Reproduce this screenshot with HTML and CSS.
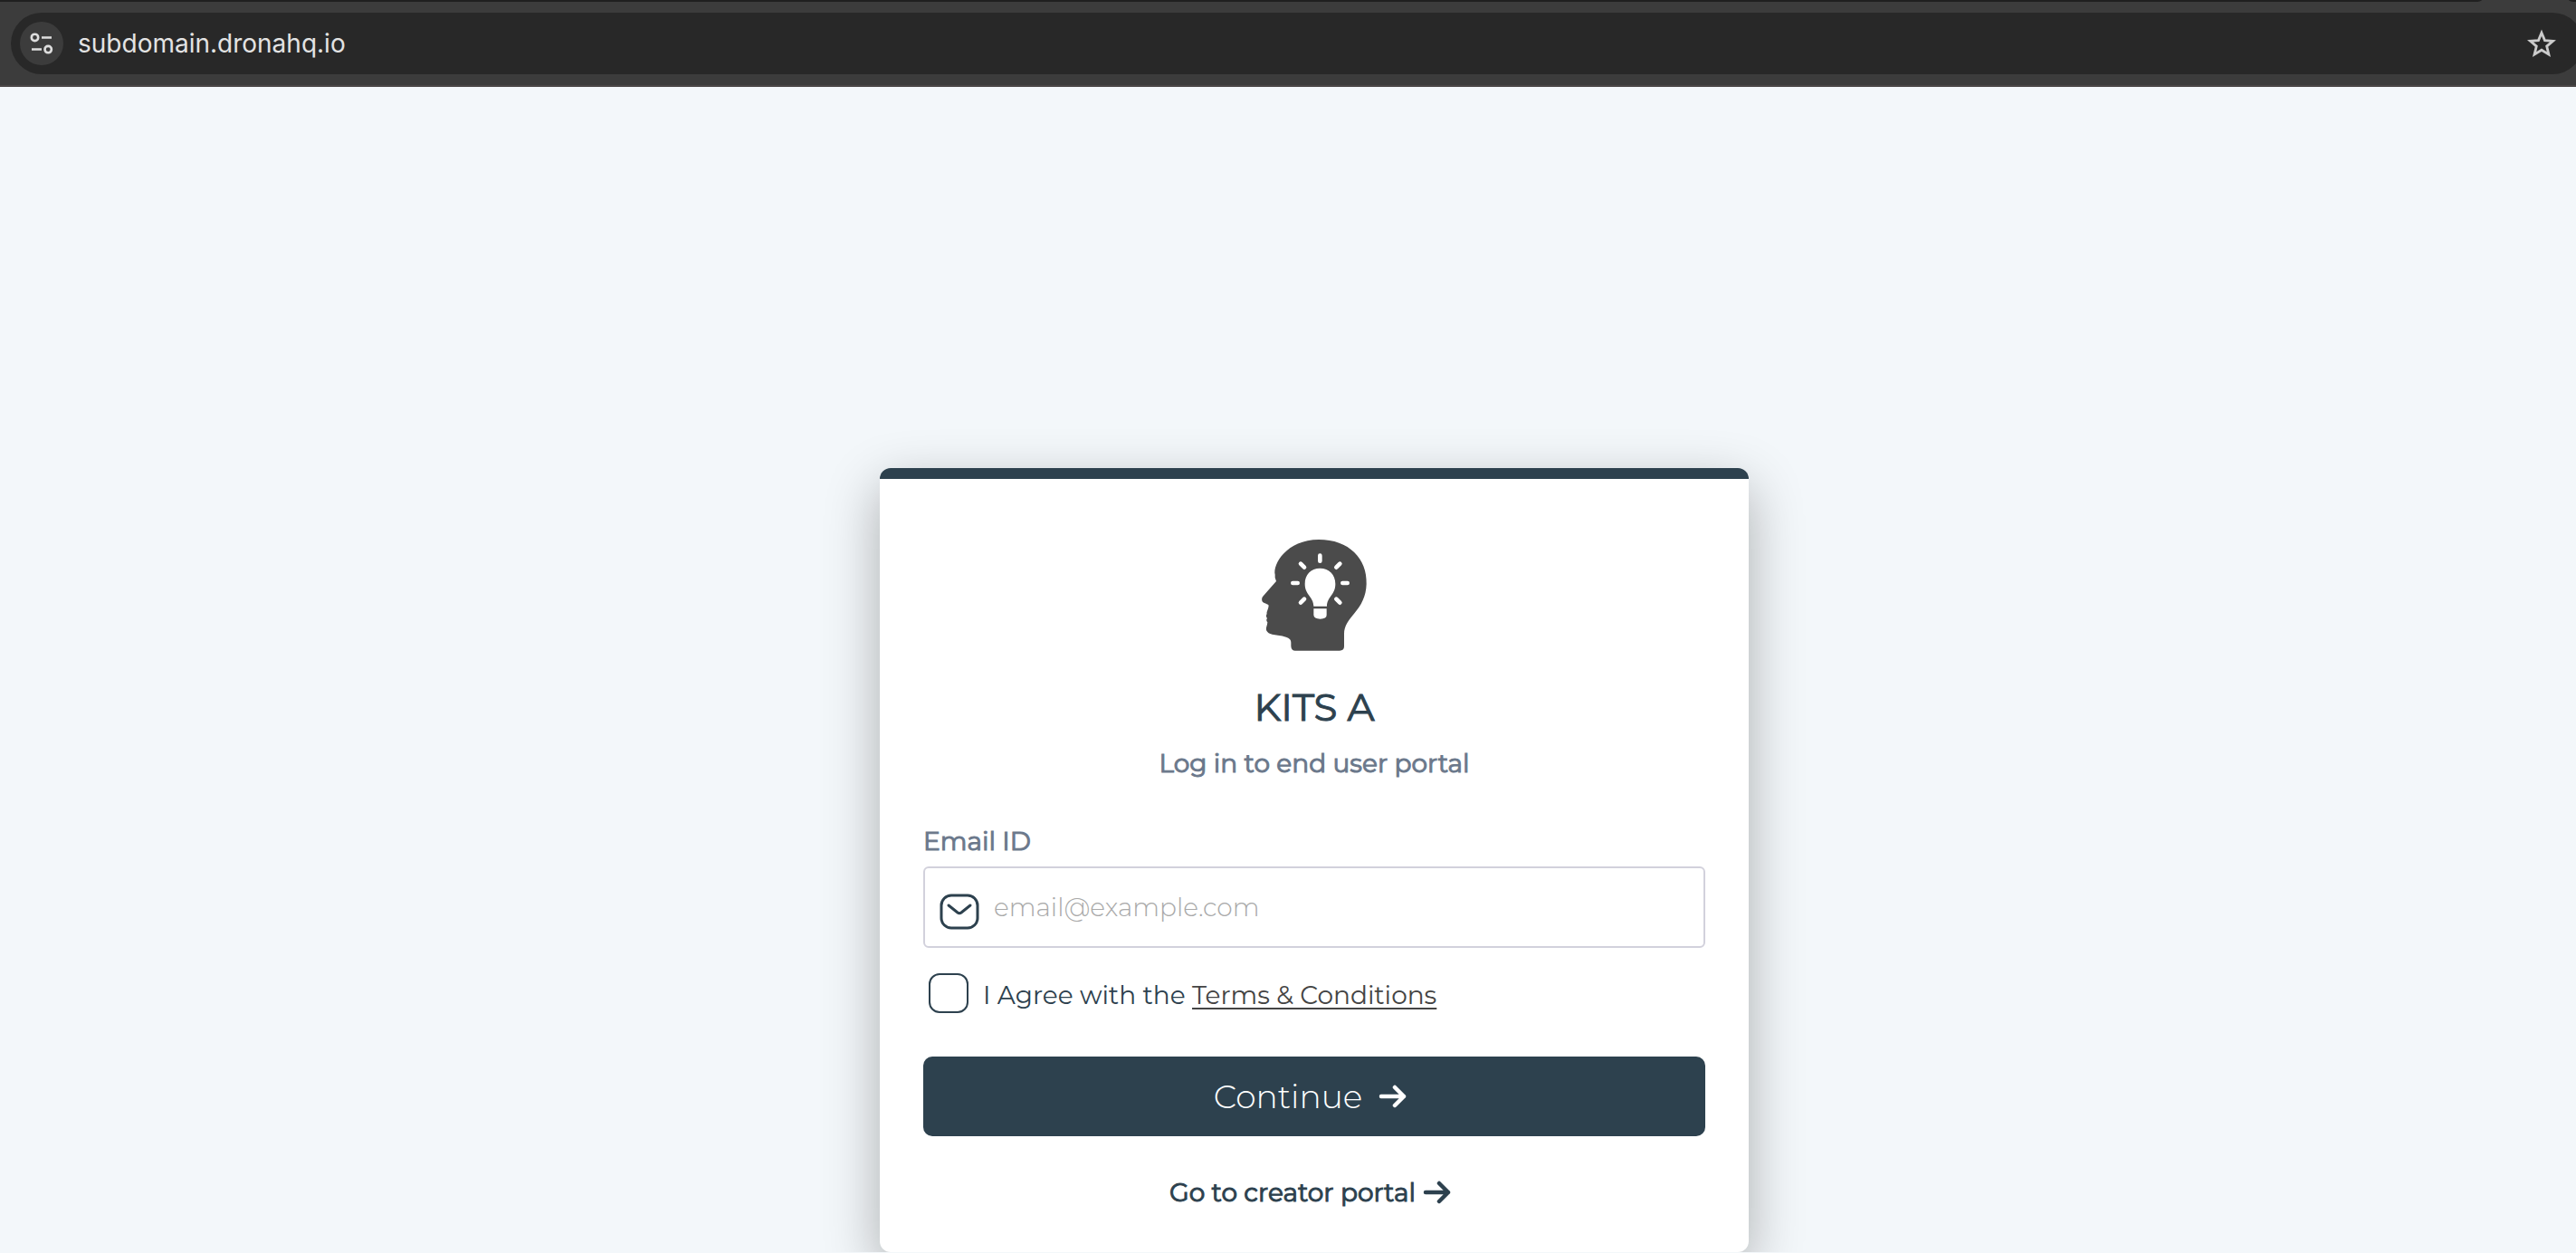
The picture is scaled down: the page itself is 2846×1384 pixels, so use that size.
FILE: index.html
```html
<!DOCTYPE html>
<html lang="en">
<head>
<meta charset="utf-8">
<title>KITS A</title>
<link rel="stylesheet" href="styles.css">
</head>
<body>
<header class="browser">
  <div class="tabstrip"><span class="tabs-left"></span><span class="tabs-right"></span></div>
  <div class="toolbar">
    <div class="omnibox">
      <button class="site-info" type="button" aria-label="Site information">
        <svg width="28" height="28" viewBox="0 0 28 28" fill="none" stroke="#dedede" stroke-width="2.6"><circle cx="6.5" cy="7.4" r="3.7"/><path d="M14 7.5h11M3 20.5h11"/><circle cx="21.2" cy="20.6" r="3.7"/></svg>
      </button>
      <span class="url">subdomain.dronahq.io</span>
      <button class="bookmark" type="button" aria-label="Bookmark this page">
        <svg width="32" height="32" viewBox="0 0 32 32" fill="none" stroke="#cbcbcb" stroke-width="2.8"><path d="M16 4.2l3.5 8.4 9 .7-6.8 5.8 2.2 9-7.9-4.9-7.9 4.9 2.2-9-6.8-5.8 9-.7z"/></svg>
      </button>
    </div>
  </div>
</header>
<main class="page">
  <form class="card">
    <svg class="logo" width="140" height="140" viewBox="0 0 420 420" aria-hidden="true">
      <path fill="#4b4b4b" d="M80 143C72 110 118 27 225 27C325 27 386 90 383 174C382 216 365 245 344 270C324 295 309 312 309 340L309 381Q309 395 294 395H147Q134 395 133 380V368Q133 356 119 351C95 340 61 349 51 327C49 319 55 310 55 301Q49 294 54 288Q48 280 53 273C51 266 58 258 59 245C54 237 32 241 37 220Q40 214 45 209L84 165Q78 153 80 143Z"/>
      <path fill="#fff" d="M179 174C179 143 199 122 229 122S280 143 280 174C280 211 252 217 252 248H208C208 217 179 211 179 174ZM208 256H251V277Q251 290 230 290T208 277Z"/>
      <path stroke="#fff" stroke-width="14" stroke-linecap="round" fill="none" d="M229 80v18M139 171h16M304 171h16M165 107l12 12M295 107l-12 12M165 236l12-12M295 236l-12-12"/>
    </svg>
    <h1 class="title">KITS A</h1>
    <p class="subtitle">Log in to end user portal</p>
    <label class="label" for="email">Email ID</label>
    <div class="field">
      <svg class="envelope" width="44" height="40" viewBox="0 0 44 40" fill="none" stroke="#2d414e" stroke-width="3" stroke-linecap="round" stroke-linejoin="round" aria-hidden="true"><rect x="2" y="2" width="40" height="36" rx="11"/><path d="M10 13l10 8q2 1.500 4 0l10-8"/></svg>
      <input class="email" id="email" type="email" placeholder="email@example.com">
    </div>
    <div class="agree">
      <input class="tick" id="agree" type="checkbox">
      <label class="agree-text" for="agree">I Agree with the <a class="terms" href="#terms">Terms &amp; Conditions</a></label>
    </div>
    <button class="continue" type="submit">Continue
      <svg width="32" height="26" viewBox="0 0 32 26" fill="none" stroke="currentColor" stroke-width="4.500" stroke-linecap="round" stroke-linejoin="round" aria-hidden="true"><path d="M3 13h25M18 3l10 10-10 10"/></svg>
    </button>
    <a class="creator" href="#creator">Go to creator portal
      <svg width="32" height="26" viewBox="0 0 32 26" fill="none" stroke="currentColor" stroke-width="4.500" stroke-linecap="round" stroke-linejoin="round" aria-hidden="true"><path d="M3 13h25M18 3l10 10-10 10"/></svg>
    </a>
  </form>
</main>
</body>
</html>
```
FILE: styles.css
```css
* { box-sizing: border-box; }
body {
  margin: 0;
  background: #f3f7fa;
  color: #2d414e;
  font-family: Montserrat, Inter, sans-serif;
  font-size: 28px;
  line-height: 36px;
  overflow-x: hidden;
}
svg { display: block; flex: none; }
.browser { background: #3c3c3c; border-bottom: 2px solid #4a4646; overflow: hidden; }
.tabstrip { display: flex; justify-content: space-between; height: 2px; }
.tabs-left { flex: 1; margin-right: 96px; background: #202020; border-bottom-right-radius: 8px 2px; }
.tabs-right { width: 8px; background: #202020; border-bottom-left-radius: 8px 2px; }
.toolbar { padding: 12px 0 12px 12px; }
.omnibox {
  display: flex;
  align-items: center;
  height: 68px;
  margin-right: -8px;
  padding: 0 30px 0 10px;
  border-radius: 34px;
  background: #282828;
}
.site-info, .bookmark {
  display: flex;
  align-items: center;
  justify-content: center;
  padding: 0;
  border: 0;
  background: none;
}
.site-info { width: 48px; height: 48px; border-radius: 50%; background: #3c3c3c; }
.url { flex: 1; margin-left: 16px; color: #e3e3e3; font-family: Inter, sans-serif; }
.page { display: flex; justify-content: center; padding: 421px 0 0 58px; }
.card {
  display: flex;
  flex-direction: column;
  width: 100%;
  max-width: 960px;
  padding: 58px 48px 48px;
  border-top: 12px solid #2d414e;
  border-radius: 12px;
  background: #fff;
  box-shadow: 0 20px 60px rgba(0, 0, 0, .3);
}
.logo { align-self: center; }
.title, .subtitle, .label, .creator { font-weight: 400; -webkit-text-stroke: 1px currentColor; }
.title { margin: 28px 0 0; font-size: 42px; line-height: 52px; text-align: center; }
.subtitle { margin: 18px 0 0; color: #6b788b; text-align: center; }
.label { margin: 50px 0 10px; color: #6b788b; }
.field {
  display: flex;
  align-items: center;
  gap: 16px;
  height: 90px;
  padding: 0 16px;
  border: 2px solid #d2d1dc;
  border-radius: 6px;
}
.envelope { margin-top: 10px; }
.email {
  flex: 1;
  min-width: 0;
  padding: 0;
  border: 0;
  outline: 0;
  background: none;
  color: inherit;
  font: inherit;
  font-weight: 300;
}
.email::placeholder { color: #a9a9a9; opacity: 1; }
.agree { display: flex; align-items: center; gap: 16px; margin: 28px 0 48px 6px; }
.agree-text { padding-top: 4px; }
.tick {
  appearance: none;
  width: 44px;
  height: 44px;
  margin: 0;
  border: 2px solid #2d414e;
  border-radius: 12px;
  background: #fff;
}
.tick:checked { background: #2d414e; }
.terms { color: #444; text-decoration: underline; text-decoration-thickness: 2px; text-underline-offset: 4px; }
.continue {
  display: flex;
  align-items: center;
  justify-content: center;
  gap: 18px;
  height: 88px;
  padding: 0 8px 0 0;
  border: 0;
  border-radius: 10px;
  background: #2d414e;
  color: #fff;
  font: inherit;
  font-size: 36px;
  font-weight: 300;
}
.creator {
  display: flex;
  align-items: center;
  align-self: center;
  gap: 8px;
  margin-top: 44px;
  padding-right: 8px;
  color: inherit;
  text-decoration: none;
}
```
